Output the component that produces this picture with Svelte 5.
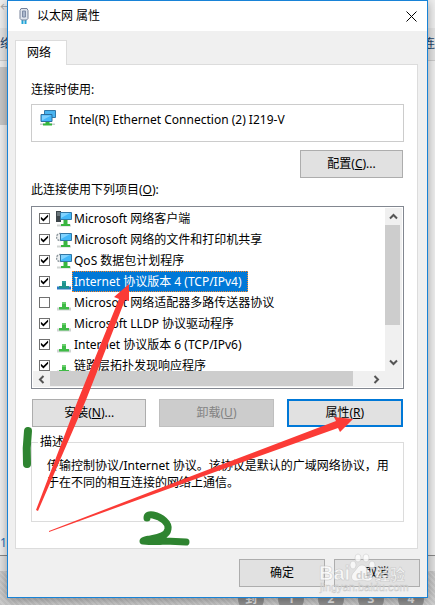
<script>
  // 网络组件列表
  let items = [
    { name: 'Microsoft 网络客户端', icon: 'client', checked: true },
    { name: 'Microsoft 网络的文件和打印机共享', icon: 'service', checked: true },
    { name: 'QoS 数据包计划程序', icon: 'service', checked: true },
    { name: 'Internet 协议版本 4 (TCP/IPv4)', icon: 'protocol', checked: true },
    { name: 'Microsoft 网络适配器多路传送器协议', icon: 'protocol', checked: false },
    { name: 'Microsoft LLDP 协议驱动程序', icon: 'protocol', checked: true },
    { name: 'Internet 协议版本 6 (TCP/IPv6)', icon: 'protocol', checked: true },
    { name: '链路层拓扑发现响应程序', icon: 'protocol', checked: true }
  ];

  let selected = 3;
  let adapter = 'Intel(R) Ethernet Connection (2) I219-V';
  const pages = ['到', '1', '2', '3', '4'];
</script>

<div class="desktop">
  <!-- 后面的窗口 -->
  <div class="backdrop" aria-hidden="true">
    <div class="back-title">←</div>
    <div class="back-tools"><span>络</span><span>连</span></div>
    <div class="back-body">
      <div class="back-side"></div>
      <span class="back-count">1</span>
    </div>
    <div class="back-gap"></div>
    <div class="back-pages">
      {#each pages as page}
        <span class="page">{page}</span>
      {/each}
    </div>
  </div>

  <div class="dialog" role="dialog" aria-labelledby="dialog-title">
    <header>
      <svg class="plug" viewBox="0 0 12 18" width="12" height="18">
        <path d="M3.500 12h2v5h-2zM6.500 12h2v5h-2z" fill="#20a4d8" />
        <path d="M3 1.500h6l1 2v8l-1.500 1.500h-5L2 11.500v-8z" fill="#dfe5ee" stroke="#77829a" />
        <path d="M4.500 4h3v6h-3z" fill="#aab7cc" stroke="#7f8ca6" />
      </svg>
      <h1 id="dialog-title">以太网 属性</h1>
      <button class="close" aria-label="关闭">
        <svg viewBox="0 0 11 11" width="11" height="11">
          <path d="M.5.5l10 10M10.500.5l-10 10" stroke="#000" fill="none" />
        </svg>
      </button>
    </header>

    <div class="content">
      <div role="tablist">
        <button class="tab" role="tab" aria-selected="true">网络</button>
      </div>

      <div class="panel" role="tabpanel">
        <label class="caption" for="adapter">连接时使用:</label>
        <div class="adapter">
          <svg viewBox="0 0 18 18" width="18" height="18">
            <path d="M1 14.500h15v1.500H1z" fill="#c9ced0" />
            <path d="M5.500 1.500h11v7h-11z" fill="#4ab4f0" stroke="#3478a8" />
            <path d="M2 5.500h11v7H2z" fill="#44b6fa" stroke="#2c6e9e" />
            <path d="M3 6.500h9l-9 5z" fill="#7fd0ff" />
            <path d="M6.500 13h4v1.500h2.500v2H4v-2h2.500z" fill="#35b53c" />
          </svg>
          <input id="adapter" type="text" readonly value={adapter} />
        </div>

        <div class="configure">
          <button class="btn mid">配置(<u>C</u>)...</button>
        </div>

        <div class="caption" id="items-label">此连接使用下列项目(<u>O</u>):</div>
        <div class="listbox">
          <div class="view">
            <ul aria-labelledby="items-label">
              {#each items as item, i}
                <li>
                  <input type="checkbox" id="item-{i}" bind:checked={item.checked} />
                  <svg class="icon" viewBox="0 0 16 16" width="16" height="16">
                    {#if item.icon === 'protocol'}
                      <path d="M1 12.500h14v3H1z" fill={selected === i ? '#2a78c4' : '#cfd4d2'} />
                      <path d="M6 7h4v5h3v2.500H3V12h3z" fill={selected === i ? '#1f928c' : '#3fbb46'} />
                      <path d="M6 7h4v2H6z" fill={selected === i ? '#2c9f9a' : '#6bcf6e'} />
                    {:else}
                      {#if item.icon === 'client'}
                        <path d="M0 0h5v11H0z" fill="#3d464b" />
                        <path d="M1 2h3M1 4h3" stroke="#9ba7ad" />
                      {:else}
                        <circle cx="4" cy="5" r="3.500" fill="#eef0f1" stroke="#8d979d" stroke-width="1.500" stroke-dasharray="2 1" />
                      {/if}
                      <path d="M1 13.500h14v2H1z" fill="#cfd4d2" />
                      <path d="M4.500 1.500h11v7h-11z" fill="#42b7f8" stroke="#3177a5" />
                      <path d="M5 2h9l-9 5z" fill="#80d3ff" />
                      <path d="M7.500 9h4v4H14v2H5v-2h2.500z" fill="#39b640" />
                    {/if}
                  </svg>
                  <label for="item-{i}" class:selected={selected === i}>{item.name}</label>
                </li>
              {/each}
            </ul>
            <div class="vbar">
              <button class="arrow" aria-label="向上滚动">
                <svg viewBox="0 0 9 9" width="9" height="9"><path d="M1 6.500l3.500-3.500L8 6.500" /></svg>
              </button>
              <div class="thumb"></div>
              <button class="arrow" aria-label="向下滚动">
                <svg viewBox="0 0 9 9" width="9" height="9"><path d="M1 2.500L4.500 6 8 2.500" /></svg>
              </button>
            </div>
          </div>
          <div class="hbar">
            <button class="arrow" aria-label="向左滚动">
              <svg viewBox="0 0 9 9" width="9" height="9"><path d="M6.500 1L3 4.500 6.500 8" /></svg>
            </button>
            <div class="thumb"></div>
            <button class="arrow" aria-label="向右滚动">
              <svg viewBox="0 0 9 9" width="9" height="9"><path d="M2.500 1L6 4.500 2.500 8" /></svg>
            </button>
          </div>
        </div>

        <div class="actions">
          <button class="btn">安装(<u>N</u>)...</button>
          <button class="btn" disabled>卸载(<u>U</u>)</button>
          <button class="btn default">属性(<u>R</u>)</button>
        </div>

        <fieldset>
          <legend>描述</legend>
          <p>传输控制协议/Internet 协议。该协议是默认的广域网络协议，用于在不同的相互连接的网络上通信。</p>
        </fieldset>
      </div>

      <footer>
        <button class="btn">确定</button>
        <button class="btn">取消</button>
      </footer>
    </div>
  </div>

  <!-- 手绘标注 -->
  <svg class="marks" viewBox="0 0 435 605" width="435" height="605" aria-hidden="true">
    <g fill="#fb3b36">
      <path d="M36 510L78 400 119 299 114 297 129 284 129 301 125 300 86 400 38 511z" />
      <path d="M49 531L215 467 336 421 334 417 353 419 340 432 338 428 215 472 49 532z" />
    </g>
    <g fill="none" stroke="#2e8430" stroke-linecap="round" stroke-linejoin="round">
      <path d="M28 431Q26 448 27 464" stroke-width="8" />
      <path d="M147 518Q147 514 153 515C162 517 169 523 168 529C167 537 156 538 150 539Q143 540 143 541Q155 542 165 541L186 542" stroke-width="7" />
    </g>
  </svg>

  <svg class="watermark" viewBox="0 0 96 44" width="96" height="44" aria-hidden="true">
    <g fill="#fff" stroke="#bbb" stroke-width=".5">
      <text x="2" y="28" class="brand">Bai</text>
      <ellipse cx="36" cy="13" rx="3" ry="4" />
      <ellipse cx="41" cy="6" rx="3" ry="4" />
      <ellipse cx="49" cy="6" rx="3" ry="4" />
      <ellipse cx="55" cy="13" rx="3" ry="4" />
      <path d="M45 13c4 0 5 4 8 7 4 4 3 9-2 9-3 0-3-1-6-1s-3 1-6 1c-5 0-6-5-2-9 3-3 4-7 8-7z" />
      <text x="58" y="28" class="exp">经验</text>
      <text x="3" y="39" class="site">jingyan.baidu.com</text>
    </g>
    <text x="39" y="27" class="du">du</text>
  </svg>
</div>

<style>
  :global(body) {
    background: #f0f0f0;
  }

  .desktop {
    position: relative;
    overflow: hidden;
    padding: 0 7px 7px;
    font-family: 'Noto Sans', 'Noto Sans CJK SC', sans-serif;
    font-size: 12px;
    line-height: 16px;
    color: #000;
  }

  .backdrop {
    position: absolute;
    inset: 0;
    display: flex;
    flex-direction: column;
    background: #efefef;
    color: #24466e;
  }

  .back-title {
    height: 20px;
    padding-bottom: 8px;
    color: #aaa;
  }

  .back-tools {
    display: flex;
    justify-content: space-between;
    align-items: center;
    height: 32px;
    background: #e4e4e4;
    border-bottom: 1px solid #ccc;
  }

  .back-body {
    flex: 1;
    display: flex;
    flex-direction: column;
    justify-content: space-between;
    padding: 6px 0 4px;
    border-bottom: 1px solid #888;
  }

  .back-side {
    width: 8px;
    height: 58px;
    background: #c8c8c8;
  }

  .back-count {
    color: #1c6fb8;
  }

  .back-gap {
    height: 15px;
    background: #e2e2e2;
  }

  .back-pages {
    display: flex;
    justify-content: flex-end;
    align-items: flex-end;
    gap: 14px;
    height: 34px;
    padding-right: 11px;
    overflow: hidden;
    background: repeating-linear-gradient(45deg, #c4c4c4 0 2px, #cecece 2px 4px);
  }

  .page {
    flex: none;
    width: 26px;
    height: 26px;
    margin-bottom: -7px;
    border-radius: 50%;
    background: #929292;
    color: #e8e8e8;
    font-weight: bold;
    line-height: 26px;
    text-align: center;
  }

  .dialog {
    position: relative;
    border: 1px solid #1883d7;
    background: #f0f0f0;
    box-shadow: 0 2px 10px rgba(0, 0, 0, 0.35);
  }

  header {
    display: flex;
    align-items: center;
    height: 30px;
    padding: 0 10px;
    background: #fff;
  }

  .plug {
    margin-right: 7px;
  }

  h1 {
    flex: 1;
    margin: 0;
    font-size: 12px;
    font-weight: normal;
  }

  button {
    font: inherit;
    color: inherit;
    padding: 0;
  }

  .close {
    display: flex;
    border: none;
    background: none;
  }

  .content {
    padding: 9px 7px 10px;
  }

  .tab {
    position: relative;
    display: block;
    width: 52px;
    height: 25px;
    margin-bottom: -1px;
    padding-right: 4px;
    border: 1px solid #dcdcdc;
    border-bottom: none;
    background: #fff;
    z-index: 1;
  }

  .panel {
    margin-right: 2px;
    padding: 17px 13px 26px 15px;
    border: 1px solid #dcdcdc;
    background: #fff;
  }

  .caption {
    display: block;
  }

  .adapter {
    display: flex;
    gap: 12px;
    height: 28px;
    margin-top: 6px;
    padding: 4px 7px;
    border: 1px solid #ccc;
  }

  .adapter input {
    flex: 1;
    height: 20px;
    padding: 0;
    border: none;
    outline: none;
    background: none;
    font: inherit;
  }

  .configure {
    display: flex;
    justify-content: flex-end;
    padding: 8px 1px 4px;
  }

  .btn {
    flex: none;
    width: 86px;
    height: 28px;
    border: 1px solid #adadad;
    background: #e1e1e1;
  }

  .btn.mid {
    width: 103px;
  }

  .btn:disabled {
    border-color: #bfbfbf;
    background: #ccc;
    color: #838383;
  }

  .btn.default {
    border: 2px solid #0078d7;
  }

  .listbox {
    margin-top: 8px;
    padding: 1px;
    border: 1px solid #828790;
  }

  .view {
    display: flex;
    height: 163px;
  }

  ul {
    flex: 1;
    margin: 0;
    padding: 0 0 0 6px;
    overflow: hidden;
    list-style: none;
  }

  li {
    display: flex;
    align-items: center;
    height: 21px;
  }

  input[type='checkbox'] {
    appearance: none;
    flex: none;
    width: 11px;
    height: 11px;
    margin: 0 6px 1px 0;
    border: 1px solid #707070;
    background: #fff;
  }

  input[type='checkbox']:checked::before {
    content: '';
    display: block;
    width: 9px;
    height: 9px;
    background: #000;
    clip-path: polygon(10% 35%, 38% 62%, 90% 10%, 90% 36%, 38% 90%, 10% 62%);
  }

  .icon {
    flex: none;
  }

  li label {
    padding: 2px 5px 1px 1px;
    border: 1px solid transparent;
    white-space: nowrap;
  }

  label.selected {
    border: 1px dotted #ff8728;
    background: #0078d7;
    color: #fff;
  }

  .vbar {
    display: flex;
    flex-direction: column;
    width: 17px;
    background: #f0f0f0;
  }

  .hbar {
    display: flex;
    height: 16px;
    padding-right: 17px;
    background: #f0f0f0;
  }

  .arrow {
    display: flex;
    flex: none;
    align-items: center;
    justify-content: center;
    width: 17px;
    height: 17px;
    border: none;
    background: none;
  }

  .arrow path {
    fill: none;
    stroke: #555;
    stroke-width: 2;
  }

  .vbar .thumb {
    width: 15px;
    height: 100px;
    margin-bottom: auto;
    background: #cdcdcd;
  }

  .hbar .thumb {
    width: 303px;
    height: 15px;
    margin-right: auto;
    background: #cdcdcd;
  }

  .actions {
    display: flex;
    gap: 13px;
    padding: 10px 1px 7px;
  }

  .actions .btn {
    flex: 1 1 0;
    min-width: 0;
  }

  fieldset {
    margin: 0;
    padding: 0 6px;
    border: 1px solid #dcdcdc;
  }

  legend {
    padding: 0 2px;
  }

  p {
    margin: 0;
    padding: 7px 0 30px 9px;
    line-height: 17px;
  }

  footer {
    display: flex;
    justify-content: flex-end;
    gap: 9px;
    padding-top: 10px;
  }

  .marks {
    position: absolute;
    top: 0;
    left: 0;
    pointer-events: none;
  }

  .watermark {
    position: absolute;
    right: 22px;
    bottom: 9px;
    opacity: 0.75;
    pointer-events: none;
  }

  .brand {
    font: bold 20px 'Liberation Sans', sans-serif;
  }

  .du {
    font: bold 11px 'Liberation Sans', sans-serif;
    fill: #ccc;
  }

  .exp {
    font: bold 15px 'Noto Sans CJK SC', sans-serif;
  }

  .site {
    font: 11px 'Liberation Sans', sans-serif;
  }
</style>
